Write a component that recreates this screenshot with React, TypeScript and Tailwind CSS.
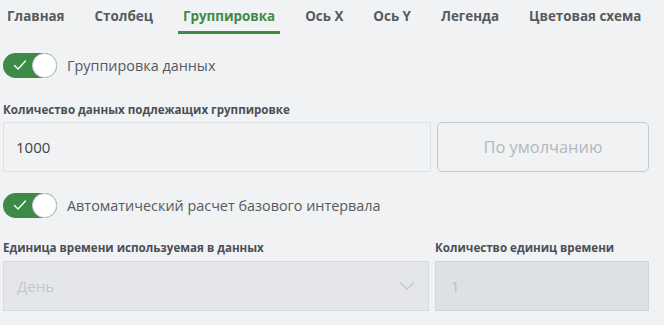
import { useState } from "react";

const tabs = ["Главная", "Столбец", "Группировка", "Ось X", "Ось Y", "Легенда", "Цветовая схема"];

function Toggle({ label }: { label: string }) {
  return (
    <div className="flex items-center gap-[10px]">
      <div className="relative w-[54px] h-[25px] rounded-full bg-[#3d8b47] shrink-0">
        <svg className="absolute left-[10px] top-[6px]" width="14" height="12" viewBox="0 0 14 12" fill="none">
          <path d="M1.5 6.5 L5 10 L12.5 2" stroke="white" strokeWidth="1.4" strokeLinecap="round" strokeLinejoin="round" />
        </svg>
        <div className="absolute right-0 top-0 w-[25px] h-[25px] rounded-full bg-white border border-[#c9cdd1]" />
      </div>
      <span className="text-[14.4px] text-[#555a60]">{label}</span>
    </div>
  );
}

export default function App() {
  const [active, setActive] = useState(2);
  return (
    <div className="w-[664px] h-[325px] bg-[#f0f2f4] font-['Open_Sans',sans-serif] overflow-hidden">
      <div className="flex h-[34px] pl-[2px] gap-[20px]">
        {tabs.map((t, i) => (
          <button
            key={t}
            onClick={() => setActive(i)}
            className={
              "px-[5px] pt-[2px] h-[34px] text-[13.4px] font-bold border-b-[3px] " +
              (i === active ? "text-[#3d8b47] border-[#3d8b47]" : "text-[#555a60] border-transparent")
            }
          >
            {t}
          </button>
        ))}
      </div>

      <div className="px-[3px] pr-[15px]">
        <div className="mt-[19px]">
          <Toggle label="Группировка данных" />
        </div>

        <div className="mt-[23px] text-[11.6px] font-bold text-[#4a4f55]">Количество данных подлежащих группировке</div>
        <div className="mt-[4px] flex gap-[6px]">
          <input
            defaultValue="1000"
            className="w-[428px] h-[50px] px-[12px] text-[15px] text-[#3f4448] bg-[#f0f2f4] border border-[#dfe2e5] outline-none"
          />
          <button className="flex-1 h-[50px] rounded-[5px] border border-[#c6cacd] text-[#b3b8bd] text-[16.4px]">
            По умолчанию
          </button>
        </div>

        <div className="mt-[21px]">
          <Toggle label="Автоматический расчет базового интервала" />
        </div>

        <div className="mt-[21px] flex gap-[6px]">
          <div className="w-[426px]">
            <div className="text-[11.6px] font-bold text-[#4a4f55]">Единица времени используемая в данных</div>
            <div className="mt-[4px] h-[50px] px-[13px] flex items-center justify-between bg-[#e4e6e9] border border-[#d6d9dc]">
              <span className="text-[15px] text-[#c3c7cb]">День</span>
              <svg width="16" height="10" viewBox="0 0 16 10" fill="none">
                <path d="M1 1.5 L8 8 L15 1.5" stroke="#c3c7cb" strokeWidth="1.3" />
              </svg>
            </div>
          </div>
          <div className="flex-1">
            <div className="text-[11.6px] font-bold text-[#4a4f55]">Количество единиц времени</div>
            <div className="mt-[4px] h-[50px] px-[15px] flex items-center bg-[#dee1e4] border border-[#d2d5d8]">
              <span className="text-[15px] text-[#b9bec2]">1</span>
            </div>
          </div>
        </div>
      </div>
    </div>
  );
}
